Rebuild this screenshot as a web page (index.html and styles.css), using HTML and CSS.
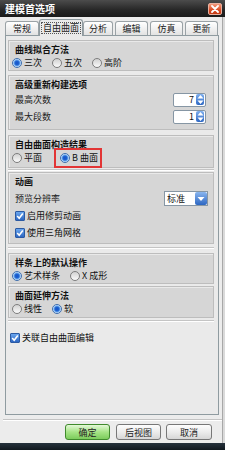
FILE: index.html
```html
<!DOCTYPE html>
<html lang="zh">
<head>
<meta charset="utf-8">
<title>建模首选项</title>
<link rel="stylesheet" href="styles.css">
</head>
<body>
<div class="window">
  <div class="titlebar">
    <span class="title">建模首选项</span>
    <span class="close"><svg width="8" height="8" viewBox="0 0 8 8"><path d="M1 1L7 7M7 1L1 7" stroke="#fff" stroke-width="1.8" stroke-linecap="round"/></svg></span>
  </div>
  <div class="tabs">
    <div class="tab t1">常规</div>
    <div class="tab active"><span class="focus">自由曲面</span></div>
    <div class="tab t3">分析</div>
    <div class="tab t4">编辑</div>
    <div class="tab t5">仿真</div>
    <div class="tab t6">更新</div>
  </div>
  <div class="panel">
    <div class="group g1">
      <div class="gtitle">曲线拟合方法</div>
      <div class="row">
        <span class="opt w40"><span class="radio on"></span>三次</span>
        <span class="opt w40"><span class="radio"></span>五次</span>
        <span class="opt"><span class="radio"></span>高阶</span>
      </div>
    </div>
    <div class="group g2">
      <div class="gtitle">高级重新构建选项</div>
      <div class="frow">
        <span class="lbl">最高次数</span>
        <span class="spin"><span class="val">7</span><span class="spinbtn"><svg width="7" height="11" viewBox="0 0 7 11"><path d="M0.5 4.5L3.5 1L6.5 4.5Z M0.5 6.5L3.5 10L6.5 6.5Z" fill="#fff"/></svg></span></span>
      </div>
      <div class="frow">
        <span class="lbl">最大段数</span>
        <span class="spin"><span class="val">1</span><span class="spinbtn"><svg width="7" height="11" viewBox="0 0 7 11"><path d="M0.5 4.5L3.5 1L6.5 4.5Z M0.5 6.5L3.5 10L6.5 6.5Z" fill="#fff"/></svg></span></span>
      </div>
    </div>
    <div class="group g3">
      <div class="gtitle">自由曲面构造结果</div>
      <div class="row">
        <span class="opt w42"><span class="radio"></span>平面</span>
        <span class="opt hl"><span class="radio on"></span>B 曲面</span>
      </div>
    </div>
    <div class="sep s1"></div>
    <div class="group g4">
      <div class="gtitle">动画</div>
      <div class="rows">
        <div class="frow">
          <span class="lbl">预览分辨率</span>
          <span class="combo"><span class="ctext">标准</span><span class="combobtn"><svg width="8" height="6" viewBox="0 0 8 6"><path d="M0.5 1L7.5 1L4 5Z" fill="#fff"/></svg></span></span>
        </div>
        <div class="frow">
          <span class="opt"><span class="check"><svg width="8" height="8" viewBox="0 0 8 8"><path d="M1.2 4L3.2 6.2L6.8 1.6" stroke="#fff" stroke-width="1.6" fill="none"/></svg></span>启用修剪动画</span>
        </div>
        <div class="frow">
          <span class="opt"><span class="check"><svg width="8" height="8" viewBox="0 0 8 8"><path d="M1.2 4L3.2 6.2L6.8 1.6" stroke="#fff" stroke-width="1.6" fill="none"/></svg></span>使用三角网格</span>
        </div>
      </div>
    </div>
    <div class="sep s2"></div>
    <div class="group g5">
      <div class="gtitle">样条上的默认操作</div>
      <div class="row">
        <span class="opt w58"><span class="radio on"></span>艺术样条</span>
        <span class="opt"><span class="radio"></span>X 成形</span>
      </div>
    </div>
    <div class="group g6">
      <div class="gtitle">曲面延伸方法</div>
      <div class="row">
        <span class="opt w40"><span class="radio"></span>线性</span>
        <span class="opt"><span class="radio on"></span>软</span>
      </div>
    </div>
    <div class="sep s3"></div>
    <div class="mainrow">
      <span class="opt"><span class="check"><svg width="8" height="8" viewBox="0 0 8 8"><path d="M1.2 4L3.2 6.2L6.8 1.6" stroke="#fff" stroke-width="1.6" fill="none"/></svg></span>关联自由曲面编辑</span>
    </div>
  </div>
  <div class="sep bottomsep"></div>
  <div class="buttons">
    <span class="btn ok">确定</span>
    <span class="btn">后视图</span>
    <span class="btn wide">取消</span>
  </div>
  <div class="strip"></div>
</div>
</body>
</html>
```
FILE: styles.css
```css
html, body {
  margin: 0;
  padding: 0;
}
body {
  width: 225px;
  height: 450px;
  overflow: hidden;
  background: #ececec;
  font-family: "Noto Sans CJK SC", "Noto Sans", sans-serif;
  font-size: 9px;
  color: #111;
}
.window {
  width: 225px;
  height: 450px;
  display: flex;
  flex-direction: column;
  background: #ececec;
  box-shadow: inset -2px 0 #dadada, inset -3px 0 #a8a8a8;
}
.titlebar {
  height: 17px;
  flex: none;
  display: flex;
  align-items: center;
  justify-content: space-between;
  padding: 0 3px 0 5px;
  background: linear-gradient(#4c4c4c, #262626 60%, #1a1a1a);
}
.title {
  color: #fff;
  font-weight: bold;
  font-size: 10px;
  line-height: 12px;
}
.close {
  width: 14px;
  height: 12px;
  border-radius: 2px;
  border: 1px solid #e6b0a0;
  box-sizing: border-box;
  background: linear-gradient(#f29a7c, #da4a22 60%, #c23a14);
  display: flex;
  align-items: center;
  justify-content: center;
  margin-top: 1px;
}
.tabs {
  flex: none;
  height: 16px;
  margin-top: 2px;
  padding-left: 5px;
  display: flex;
  align-items: flex-end;
}
.tab {
  height: 14px;
  box-sizing: border-box;
  border: 1px solid #9aa2a6;
  border-bottom: none;
  border-radius: 3px 3px 0 0;
  background: linear-gradient(#ffffff, #eeeeee 60%, #e2e2e2);
  display: flex;
  align-items: center;
  justify-content: center;
  line-height: 11px;
  color: #222;
}
.t1 { width: 34px; }
.t3 { width: 30px; }
.t4 { width: 33px; margin-left: 2px; }
.t5 { width: 33px; margin-left: 2px; }
.t6 { width: 33px; margin-left: 2px; }
.tab.active {
  width: 44px;
  height: 17px;
  margin-bottom: -1px;
  position: relative;
  z-index: 1;
  background: #eaeaea;
  border-color: #8f9ba0;
}
.focus {
  border: 1px dotted #555;
  padding: 0 1px;
  line-height: 10px;
}
.panel {
  flex: none;
  height: 380px;
  box-sizing: border-box;
  margin: 0 6px 0 5px;
  border: 1px solid #8f9ba0;
  background: #eaeaea;
  padding: 4px 4px 0 2px;
  display: flex;
  flex-direction: column;
}
.group {
  background: #d6d6d6;
  border: 1px solid #bdbdbd;
  box-shadow: inset 1px 1px #e9e9e9;
  padding: 2px 6px 0 3px;
}
.gtitle {
  height: 13px;
  line-height: 13px;
  font-weight: bold;
  padding-left: 3px;
  color: #111;
}
.row {
  height: 14px;
  display: flex;
  align-items: center;
}
.frow {
  height: 17px;
  display: flex;
  align-items: center;
  justify-content: space-between;
  padding-left: 3px;
}
.lbl {
  color: #222;
}
.g2 { margin-top: 4px; padding-bottom: 4px; }
.g3 { margin-top: 5px; padding-bottom: 2px; }
.g4 { padding-bottom: 2px; }
.g4 .rows { padding-top: 2px; }
.g5 { padding-bottom: 0; }
.g6 { margin-top: 2px; padding-bottom: 1px; }
.sep {
  flex: none;
  height: 0;
  border-top: 1px solid #c4c4c4;
  border-bottom: 1px solid #ffffff;
}
.s1 { margin: 1px 0 1px; }
.s2 { margin: 3px 0 4px; }
.s3 { margin: 2px 0 9px; }
.opt {
  display: inline-flex;
  align-items: center;
  white-space: nowrap;
  line-height: 12px;
}
.w40 { width: 40px; }
.w42 { width: 42px; }
.w58 { width: 58px; }
.radio {
  width: 10px;
  height: 10px;
  box-sizing: border-box;
  border-radius: 50%;
  border: 1px solid #7d7d7d;
  background: linear-gradient(#d2d2d2, #fafafa);
  margin-right: 2px;
  flex: none;
}
.radio.on {
  border-color: #3f6fae;
  background: radial-gradient(circle, #1652c4 0, #1e63d2 2px, #6aa8ee 3px, #d8eafc 4px);
}
.hl {
  height: 20px;
  box-sizing: border-box;
  border: 2px solid #e23535;
  padding: 0 2px 0 4px;
  margin: -3px 0;
}
.check {
  width: 10px;
  height: 10px;
  box-sizing: border-box;
  border: 1px solid #2b5aa3;
  border-radius: 1px;
  background: linear-gradient(#6aa6ee, #2c66c2);
  display: inline-flex;
  align-items: center;
  justify-content: center;
  margin-right: 2px;
  flex: none;
}
.spin {
  width: 33px;
  height: 14px;
  box-sizing: border-box;
  border: 1px solid #8696a4;
  border-radius: 2px;
  background: #fff;
  display: flex;
  align-items: center;
  justify-content: flex-end;
  margin-right: 1px;
  padding-right: 1px;
}
.val {
  margin-right: 2px;
  font-size: 9px;
  line-height: 11px;
}
.spinbtn {
  width: 8px;
  height: 11px;
  border-radius: 2px;
  background: linear-gradient(#7fb0ef, #2e68c4);
  display: flex;
  align-items: center;
  justify-content: center;
}
.combo {
  width: 44px;
  height: 15px;
  box-sizing: border-box;
  border: 1px solid #8696a4;
  background: #fff;
  display: flex;
  align-items: center;
  justify-content: space-between;
  padding-left: 2px;
  margin-right: -1px;
}
.ctext {
  line-height: 11px;
}
.combobtn {
  width: 12px;
  height: 13px;
  border-radius: 2px;
  background: linear-gradient(#8ab6ef, #2c66c2);
  display: flex;
  align-items: center;
  justify-content: center;
}
.mainrow {
  height: 14px;
  display: flex;
  align-items: center;
  padding-left: 2px;
}
.bottomsep {
  margin: 4px 3px 3px 3px;
}
.buttons {
  flex: none;
  height: 16px;
  display: flex;
  justify-content: flex-end;
  gap: 6px;
  padding-right: 13px;
}
.btn {
  width: 45px;
  height: 16px;
  box-sizing: border-box;
  border: 1px solid #777;
  border-radius: 3px;
  background: linear-gradient(#fdfdfd, #eaeaea 55%, #d6d6d6);
  display: flex;
  align-items: center;
  justify-content: center;
  line-height: 11px;
  color: #222;
}
.btn.wide { width: 46px; margin-left: -1px; }
.btn.ok {
  border-color: #3f8a2c;
  background: linear-gradient(#e4f8d8, #a6e486 50%, #7ccc5c);
}
.strip {
  flex: none;
  height: 7px;
  margin-top: auto;
  background: linear-gradient(#26323c, #10181e);
}
```
